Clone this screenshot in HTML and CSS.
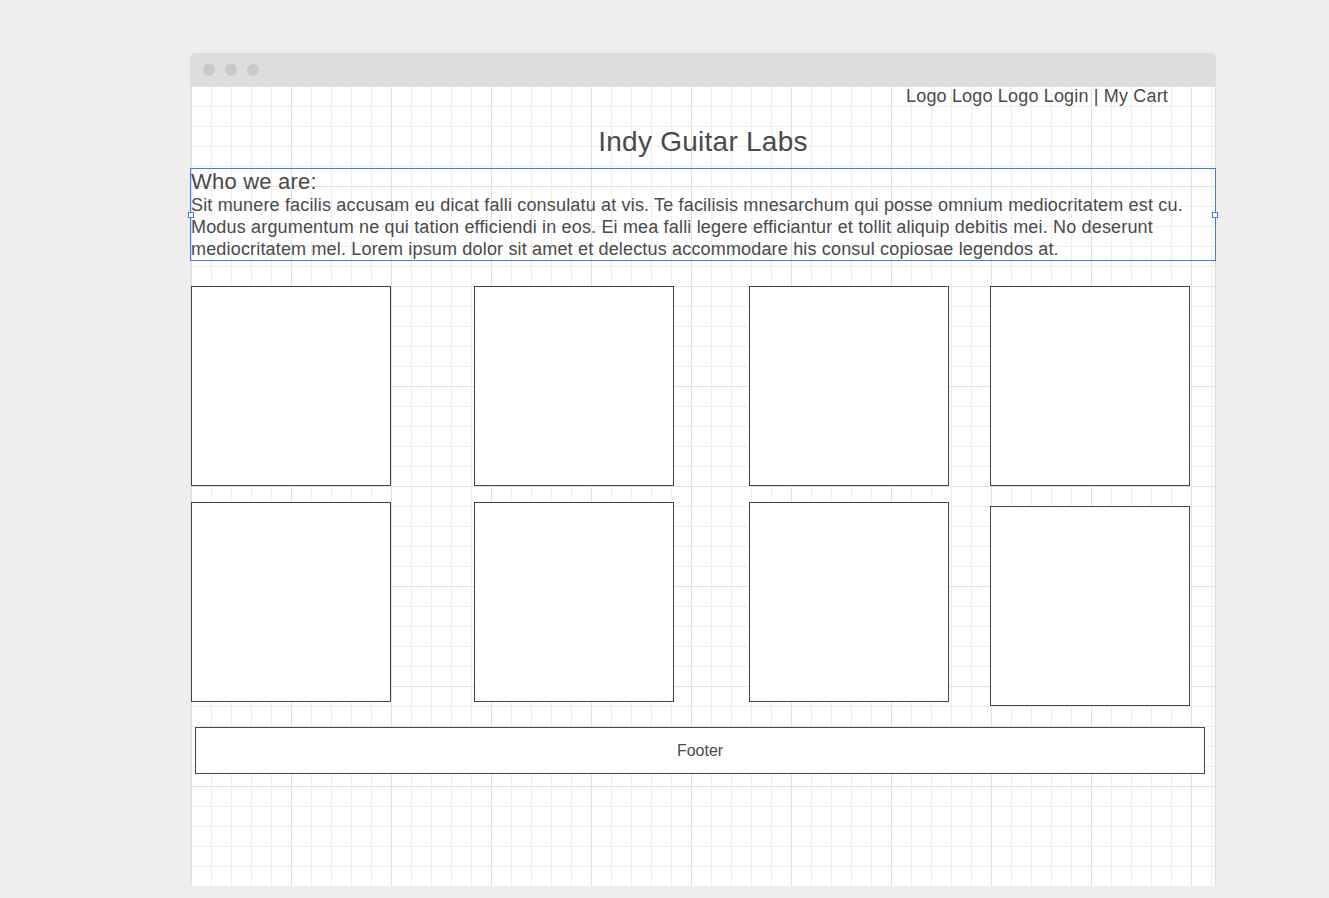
FILE: index.html
```html
<!DOCTYPE html>
<html>
<head>
<meta charset="utf-8">
<link rel="stylesheet" href="styles.css">
</head>
<body>
<div class="window">
  <div class="titlebar">
    <span class="dot"></span><span class="dot"></span><span class="dot"></span>
  </div>
  <div class="page">
    <div class="topnav">Logo Logo Logo Login | My Cart</div>
    <h1 class="title">Indy Guitar Labs</h1>
    <div class="about">
      <span class="handle handle-left"></span>
      <span class="handle handle-right"></span>
      <h2 class="about-head">Who we are:</h2>
      <p class="about-text">Sit munere facilis accusam eu dicat falli consulatu at vis. Te facilisis mnesarchum qui posse omnium mediocritatem est cu. Modus argumentum ne qui tation efficiendi in eos. Ei mea falli legere efficiantur et tollit aliquip debitis mei. No deserunt mediocritatem mel. Lorem ipsum dolor sit amet et delectus accommodare his consul copiosae legendos at.</p>
    </div>
    <div class="products">
      <div class="tile"></div>
      <div class="tile"></div>
      <div class="tile"></div>
      <div class="tile"></div>
      <div class="tile"></div>
      <div class="tile"></div>
      <div class="tile"></div>
      <div class="tile tile-shift"></div>
    </div>
    <div class="footer">Footer</div>
  </div>
</div>
</body>
</html>
```

FILE: styles.css
```css
html, body {
  margin: 0;
  padding: 0;
}
body {
  background: #eeeeee;
  font-family: "Liberation Sans", Arial, sans-serif;
  color: #4a4a4a;
  height: 898px;
  overflow: hidden;
}
.window {
  margin: 53px 0 0 190px;
  width: 1026px;
  height: 833px;
  display: flex;
  flex-direction: column;
}
.titlebar {
  height: 33px;
  background: #dddddd;
  border-radius: 5px 5px 0 0;
  display: flex;
  align-items: center;
  gap: 10px;
  padding-left: 13px;
  flex-shrink: 0;
}
.dot {
  width: 12px;
  height: 12px;
  border-radius: 50%;
  background: #c9c9c9;
}
.page {
  flex: 1;
  border-left: 1px solid #e6e6e6;
  border-right: 1px solid #dddddd;
  background-color: #ffffff;
  background-image:
    linear-gradient(#e2e2e2 1px, transparent 1px),
    linear-gradient(90deg, #e2e2e2 1px, transparent 1px),
    linear-gradient(#eeeeee 1px, transparent 1px),
    linear-gradient(90deg, #eeeeee 1px, transparent 1px);
  background-size: 100px 100px, 100px 100px, 20px 20px, 20px 20px;
  display: flex;
  flex-direction: column;
}
.topnav {
  font-size: 18px;
  line-height: 21px;
  text-align: right;
  padding-right: 47px;
  letter-spacing: 0.17px;
}
.title {
  margin: 19px 0 0 0;
  font-size: 28px;
  font-weight: normal;
  line-height: 32px;
  text-align: center;
  letter-spacing: 0.25px;
}
.about {
  position: relative;
  margin: 10px 0 0 -1px;
  width: 1024px;
  border: 1px solid #3d7fe6;
}
.handle {
  position: absolute;
  top: 43px;
  width: 4px;
  height: 4px;
  background: #ffffff;
  border: 1px solid #3d7fe6;
}
.handle-left { left: -3px; }
.handle-right { right: -3px; }
.about-head {
  margin: 0;
  font-size: 22px;
  font-weight: normal;
  line-height: 25px;
  letter-spacing: 0.2px;
}
.about-text {
  margin: 0;
  font-size: 18px;
  line-height: 22px;
  letter-spacing: 0.17px;
}
.products {
  margin-top: 25px;
  display: grid;
  grid-template-columns: 283px 275px 241px 200px;
  row-gap: 16px;
}
.tile {
  width: 198px;
  height: 198px;
  border: 1px solid #444444;
  background: #ffffff;
}
.tile-shift {
  margin-top: 4px;
}
.footer {
  margin: 21px 0 0 4px;
  width: 1008px;
  height: 45px;
  border: 1px solid #444444;
  background: #ffffff;
  display: flex;
  align-items: center;
  justify-content: center;
  font-size: 16px;
}
```
